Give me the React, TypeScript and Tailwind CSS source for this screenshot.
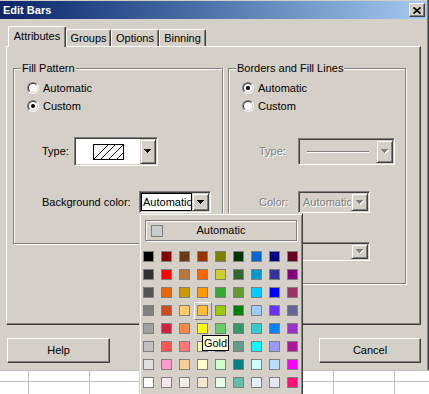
import React from "react";

const raised =
  "border border-t-white border-l-white border-r-[#404040] border-b-[#404040] shadow-[inset_-1px_-1px_0_#808080]";
const sunken =
  "border border-t-[#808080] border-l-[#808080] border-r-white border-b-white shadow-[inset_1px_1px_0_#404040,inset_-1px_-1px_0_#d4d0c8]";
const etched = "border border-[#808080] shadow-[inset_1px_1px_0_#fff,1px_1px_0_#fff]";
const comboBtn =
  "shrink-0 h-full bg-[#d4d0c8] border border-t-[#d4d0c8] border-l-[#d4d0c8] border-r-[#404040] border-b-[#404040] shadow-[inset_1px_1px_0_#fff,inset_-1px_-1px_0_#808080] flex items-center justify-center";
const disabledText = "text-[#808080] [text-shadow:1px_1px_0_#fff]";

const palette = [
  ["#000000", "#800000", "#6b3a1a", "#993300", "#808000", "#003300", "#0066cc", "#000080", "#660022"],
  ["#333333", "#ff0000", "#b5773d", "#ff6600", "#cccc33", "#336633", "#0099cc", "#333399", "#800080"],
  ["#555555", "#e8680c", "#cc9900", "#ff9900", "#33aa33", "#669933", "#00ccff", "#0000ff", "#993366"],
  ["#808080", "#cc4c22", "#ffcc66", "#ffbb33", "#99cc00", "#008000", "#99ccff", "#6633ff", "#666699"],
  ["#a0a0a0", "#cc2244", "#ff8844", "#ffff00", "#66cc66", "#339966", "#33cccc", "#0080ff", "#9933cc"],
  ["#c0c0c0", "#ff5555", "#ff7777", "#ffff99", "#99ff99", "#669988", "#00ffff", "#9999ff", "#b0169c"],
  ["#e0e0e0", "#ff99cc", "#ffcc99", "#ffffcc", "#ccffcc", "#008080", "#ccffff", "#bbddff", "#ff00ff"],
  ["#ffffff", "#ffe6ee", "#f2f0e6", "#ffe6cc", "#e6ffe6", "#66bbaa", "#e6eeff", "#e6e6ff", "#ff1177"],
];

const tri = "M0 0H7V1H6V2H5V3H4V4H3V3H2V2H1V1H0Z";

function Arrow({ disabled }: { disabled?: boolean }) {
  return (
    <svg width="8" height="5" viewBox="0 0 8 5">
      {disabled && <path d={tri} fill="#fff" transform="translate(1 1)" />}
      <path d={tri} fill={disabled ? "#808080" : "#000"} />
    </svg>
  );
}

function Radio({ label, checked }: { label: string; checked?: boolean }) {
  return (
    <div className="flex items-center h-[18px] ml-[13px] gap-[4px]">
      <div className="w-[12px] h-[12px] rounded-full border border-t-[#808080] border-l-[#808080] border-r-white border-b-white">
        <div className="w-full h-full rounded-full border border-t-[#404040] border-l-[#404040] border-r-[#d4d0c8] border-b-[#d4d0c8] bg-white flex items-center justify-center">
          {checked && <div className="w-[4px] h-[4px] rounded-full bg-black" />}
        </div>
      </div>
      <span>{label}</span>
    </div>
  );
}

function Tab({ label, width, active }: { label: string; width: string; active?: boolean }) {
  return (
    <div
      className={`${width} ${
        active ? "relative z-10 -mb-px h-[21px] pb-[2px]" : "h-[17px]"
      } bg-[#d4d0c8] border-t border-l border-r border-t-white border-l-white border-r-[#404040] shadow-[inset_-1px_0_0_#808080] rounded-t-[2px] flex items-center justify-center`}
    >
      {label}
    </div>
  );
}

export default function App() {
  return (
    <div className="relative w-[429px] h-[394px] overflow-hidden bg-white flex flex-col font-['Liberation_Sans',Arial,sans-serif] text-[11px] leading-[13px] text-black">
      {/* Dialog */}
      <div className="w-[429px] h-[370px] shrink-0 bg-[#d4d0c8] border-r border-[#404040] shadow-[inset_-1px_0_0_#808080] flex flex-col pt-[1px]">
        {/* Title bar */}
        <div className="h-[18px] shrink-0 mr-[1px] flex items-center justify-between bg-linear-to-r from-[#0a246a] to-[#a6caf0] pl-[3px] pr-[2px]">
          <span className="text-white font-bold">Edit Bars</span>
          <div className={`w-[16px] h-[14px] bg-[#d4d0c8] ${raised} flex items-center justify-center`}>
            <svg width="8" height="7" viewBox="0 0 8 7">
              <path d="M0.5 0.5L7.5 6.5M7.5 0.5L0.5 6.5" stroke="#000" strokeWidth="1.7" />
            </svg>
          </div>
        </div>

        {/* Tabs */}
        <div className="mt-[7px] h-[20px] shrink-0 flex items-end pl-[8px]">
          <Tab label="Attributes" width="w-[58px]" active />
          <Tab label="Groups" width="w-[45px]" />
          <Tab label="Options" width="w-[48px]" />
          <Tab label="Binning" width="w-[47px]" />
        </div>

        {/* Tab panel */}
        <div className="ml-[6px] w-[415px] h-[279px] shrink-0 border border-t-white border-l-white border-r-[#404040] border-b-[#404040] shadow-[inset_-1px_-1px_0_#808080] flex items-start gap-[5px] pl-[6px] pt-[15px]">
          <fieldset className={`w-[210px] h-[182px] shrink-0 ${etched}`}>
            <legend className="ml-[7px] px-[1px] bg-[#d4d0c8] leading-[13px]">Fill Pattern</legend>
            <div className="pt-[4px]">
              <Radio label="Automatic" />
              <Radio label="Custom" checked />
              <div className="mt-[22px] ml-[28px] flex items-center h-[29px]">
                <span className="w-[32px]">Type:</span>
                <div className={`w-[84px] h-[29px] ${sunken} bg-white flex p-[1px]`}>
                  <div className="flex-1 flex items-center justify-center">
                    <svg width="31" height="16" viewBox="0 0 31 16">
                      <rect x="0.5" y="0.5" width="30" height="15" fill="#fff" stroke="#000" />
                      <path
                        d="M1 15L15 1M8 15L22 1M16 15L30 1M24 15L30 9"
                        stroke="#000"
                        strokeWidth="1"
                      />
                    </svg>
                  </div>
                  <div className={`w-[16px] ${comboBtn}`}>
                    <Arrow />
                  </div>
                </div>
              </div>
              <div className="mt-[25px] ml-[28px] flex items-center h-[22px]">
                <span className="w-[97px]">Background color:</span>
                <div className={`w-[72px] h-[22px] ${sunken} bg-white flex p-[1px]`}>
                  <div className="w-[51px] h-full border border-black flex items-center pl-[1px] overflow-hidden whitespace-nowrap">
                    Automatic
                  </div>
                  <div className={`w-[17px] ${comboBtn}`}>
                    <Arrow />
                  </div>
                </div>
              </div>
            </div>
          </fieldset>

          <fieldset className={`w-[178px] h-[222px] shrink-0 ${etched}`}>
            <legend className="ml-[7px] px-[1px] bg-[#d4d0c8] leading-[13px]">Borders and Fill Lines</legend>
            <div className="pt-[4px]">
              <Radio label="Automatic" checked />
              <Radio label="Custom" />
              <div className="mt-[23px] ml-[30px] flex items-center h-[27px]">
                <span className={`w-[39px] ${disabledText}`}>Type:</span>
                <div className={`w-[97px] h-[27px] ${sunken} bg-[#d4d0c8] flex p-[1px]`}>
                  <div className="flex-1 flex items-center pl-[7px] pr-[7px]">
                    <div className="h-[1px] w-full bg-[#808080] shadow-[0_1px_0_#fff]" />
                  </div>
                  <div className={`w-[17px] ${comboBtn}`}>
                    <Arrow disabled />
                  </div>
                </div>
              </div>
              <div className="mt-[26px] ml-[30px] flex items-center h-[22px]">
                <span className={`w-[39px] ${disabledText}`}>Color:</span>
                <div className={`w-[72px] h-[22px] ${sunken} bg-[#d4d0c8] flex p-[1px]`}>
                  <div className={`flex-1 flex items-center pl-[3px] whitespace-nowrap overflow-hidden ${disabledText}`}>
                    Automatic
                  </div>
                  <div className={`w-[17px] ${comboBtn}`}>
                    <Arrow disabled />
                  </div>
                </div>
              </div>
              <div className="mt-[29px] ml-[69px] flex items-center h-[19px]">
                <div className={`w-[72px] h-[19px] ${sunken} bg-[#d4d0c8] flex p-[1px]`}>
                  <div className="flex-1" />
                  <div className={`w-[17px] ${comboBtn}`}>
                    <Arrow disabled />
                  </div>
                </div>
              </div>
            </div>
          </fieldset>
        </div>

        {/* Buttons */}
        <div className="mt-[13px] flex justify-between px-[7px]">
          <div className={`w-[103px] h-[25px] ${raised} flex items-center justify-center`}>Help</div>
          <div className={`w-[102px] h-[25px] ${raised} flex items-center justify-center`}>Cancel</div>
        </div>
      </div>

      {/* Spreadsheet behind the dialog */}
      <div className="flex-1 flex flex-col border-t border-[#c0c0c0] bg-white">
        <div className="h-[11px] flex border-b border-[#c0c0c0]">
          <div className="w-[29px] border-r border-[#c0c0c0]" />
          <div className="w-[61px] border-r border-[#c0c0c0]" />
          <div className="w-[244px] border-r border-[#c0c0c0]" />
          <div className="w-[61px] border-r border-[#c0c0c0]" />
          <div className="flex-1" />
        </div>
        <div className="flex-1 flex">
          <div className="w-[29px] border-r border-[#c0c0c0]" />
          <div className="w-[61px] border-r border-[#c0c0c0]" />
          <div className="w-[244px] border-r border-[#c0c0c0]" />
          <div className="w-[61px] border-r border-[#c0c0c0]" />
          <div className="flex-1" />
        </div>
      </div>

      {/* Colour palette drop-down */}
      <div className="absolute left-[139px] top-[213px] w-[164px] h-[200px] bg-[#d4d0c8] border border-t-[#d4d0c8] border-l-[#d4d0c8] border-r-[#404040] border-b-[#404040] shadow-[inset_1px_1px_0_#fff,inset_-1px_-1px_0_#808080]">
        <div className={`mt-[6px] mx-[5px] h-[21px] ${etched} grid grid-cols-[1fr_auto_1fr] items-center`}>
          <div className="ml-[5px] w-[12px] h-[12px] bg-[#c8ccd0] border border-[#808080]" />
          <span>Automatic</span>
          <span />
        </div>
        <div className="mt-[7px] grid grid-cols-[repeat(9,18px)]">
          {palette.map((row, r) =>
            row.map((c, i) => {
              const hot = r === 3 && i === 3;
              return (
                <div
                  key={`${r}-${i}`}
                  className={`w-[18px] h-[18px] ${
                    hot
                      ? "border border-t-white border-l-white border-r-[#808080] border-b-[#808080] pl-[2px] pt-[2px]"
                      : "pl-[3px] pt-[3px]"
                  }`}
                >
                  <div className="w-[11px] h-[11px] border border-[#808080]" style={{ backgroundColor: c }} />
                </div>
              );
            })
          )}
        </div>
      </div>

      {/* Tooltip */}
      <div className="absolute left-[202px] top-[335px] w-[27px] h-[16px] bg-[#ffffe1] border border-black flex items-center justify-center">
        Gold
      </div>
    </div>
  );
}
